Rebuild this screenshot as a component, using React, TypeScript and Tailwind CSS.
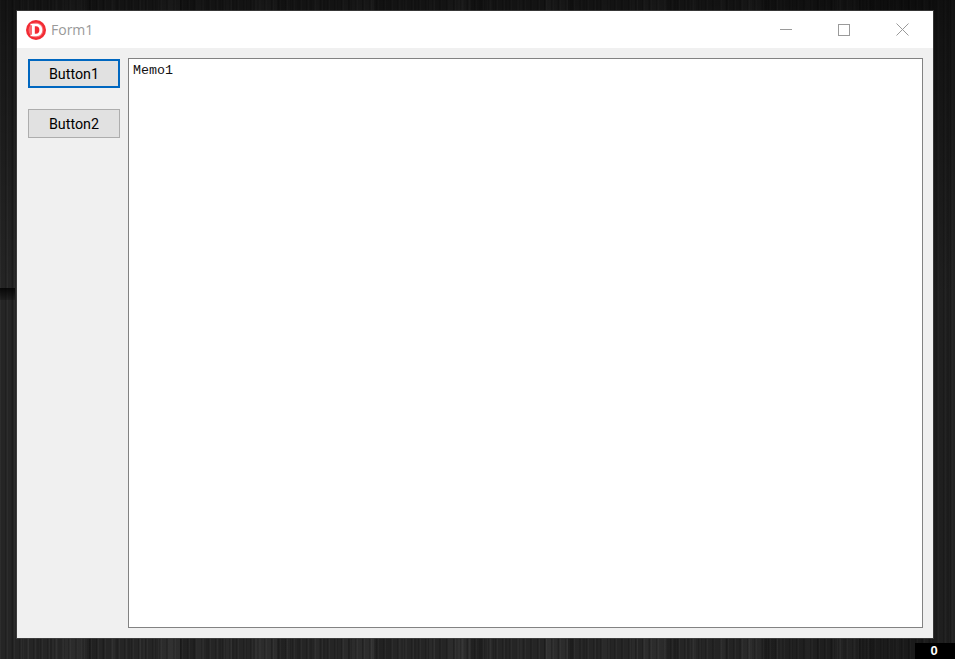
import React from 'react';

function AppIcon() {
    return (
        <svg width="20" height="20" viewBox="0 0 20 20" className="shrink-0">
            <circle cx="10" cy="10" r="10" fill="#f22b33" />
            <circle cx="10" cy="10" r="7.500" fill="#fb6a70" />
            <path d="M4.500 3.800h5.600c3.900 0 6.200 2.500 6.200 6.200s-2.300 6.200-6.200 6.200H4.500v-1.500h1.500V5.300H4.500z" fill="#fff" />
            <path d="M8.800 6.300h1.200c2.200 0 3.400 1.400 3.400 3.700s-1.200 3.700-3.400 3.700H8.800z" fill="#f22b33" />
        </svg>
    );
}

function WindowControls() {
    return (
        <div className="flex items-center text-[#9a9a9a] pr-[2px]">
            <div className="w-[58px] h-[37px] flex items-center justify-center">
                <svg width="12" height="12" viewBox="0 0 12 12">
                    <path d="M0 5.500h12" stroke="currentColor" strokeWidth="1" />
                </svg>
            </div>
            <div className="w-[58px] h-[37px] flex items-center justify-center">
                <svg width="12" height="12" viewBox="0 0 12 12">
                    <rect x="0.500" y="0.500" width="11" height="11" fill="none" stroke="currentColor" />
                </svg>
            </div>
            <div className="w-[58px] h-[37px] flex items-center justify-center">
                <svg width="13" height="13" viewBox="0 0 13 13">
                    <path d="M0.500 0.500l12 12M12.500 0.500l-12 12" stroke="currentColor" strokeWidth="1" />
                </svg>
            </div>
        </div>
    );
}

export default function App() {
    return (
        <div className="relative w-[955px] h-[659px] overflow-hidden bg-[#252525] bg-[linear-gradient(180deg,rgba(0,0,0,0.5)_0px,rgba(0,0,0,0.4)_40px,transparent_300px),linear-gradient(90deg,transparent_0px,transparent_700px,rgba(0,0,0,0.3)_900px),repeating-linear-gradient(90deg,rgba(255,255,255,0.035)_0px,rgba(255,255,255,0.035)_1px,transparent_1px,transparent_5px,rgba(0,0,0,0.16)_5px,rgba(0,0,0,0.16)_6px,transparent_6px,transparent_7px),repeating-linear-gradient(90deg,transparent_0px,transparent_11px,rgba(0,0,0,0.12)_11px,rgba(0,0,0,0.12)_13px),repeating-linear-gradient(90deg,transparent_0px,transparent_23px,rgba(255,255,255,0.025)_23px,rgba(255,255,255,0.025)_29px),repeating-linear-gradient(90deg,transparent_0px,transparent_61px,rgba(255,255,255,0.03)_61px,rgba(255,255,255,0.03)_83px,rgba(0,0,0,0.1)_83px,rgba(0,0,0,0.1)_97px)] pl-[17px] pt-[11px]">
            {/* knot in the wood */}
            <div className="absolute left-0 top-[288px] w-[15px] h-[12px] bg-[linear-gradient(180deg,rgba(0,0,0,0.8),rgba(0,0,0,0.2))]" />

            <div className="relative flex flex-col w-[916px] h-[627px] bg-[#f0f0f0] shadow-[0_0_0_1px_rgba(70,70,70,0.7)]">
                {/* Title bar */}
                <div className="flex items-center justify-between h-[37px] bg-white pl-[9px]">
                    <div className="flex items-center gap-[5px]">
                        <AppIcon />
                        <span className="text-[14px] text-[#999999] font-['Open_Sans',sans-serif]">Form1</span>
                    </div>
                    <WindowControls />
                </div>

                {/* Client area */}
                <div className="flex flex-1 gap-[8px] pl-[11px] pr-[10px] py-[10px]">
                    <div className="flex flex-col gap-[21px] w-[92px] pt-[1px]">
                        <button className="h-[29px] pt-[2px] bg-[#e1e1e1] border-2 border-[#0067c0] text-[14.300px] text-black font-['Roboto',sans-serif]">
                            Button1
                        </button>
                        <button className="h-[29px] pt-[2px] bg-[#e1e1e1] border border-[#adadad] text-[14.300px] text-black font-['Roboto',sans-serif]">
                            Button2
                        </button>
                    </div>
                    <div className="flex-1 bg-white border border-[#828282] pl-[4px] pt-[4px] text-[13.330px] leading-[15px] text-[#111111] font-['Liberation_Mono',monospace]">
                        Memo1
                    </div>
                </div>
            </div>

            {/* Counter badge */}
            <div className="absolute right-0 bottom-0 w-[40px] h-[16px] pr-[2px] bg-black text-white text-[13px] leading-[16px] font-bold text-center font-['Liberation_Sans',sans-serif]">
                0
            </div>
        </div>
    );
}
